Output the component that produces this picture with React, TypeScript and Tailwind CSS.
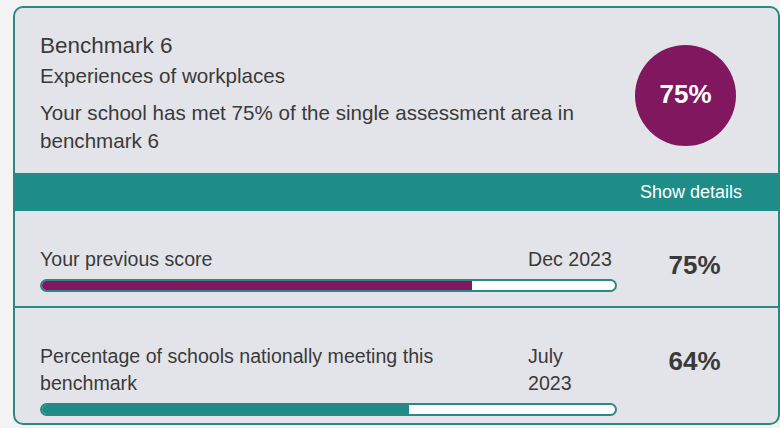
const rows = [
  { label: 'Your previous score', date: ['Dec 2023'], score: 75, fill: 'bg-[#80175f]', pt: 'pt-[35px]', scorePt: 'pt-[39px]', h: 'h-[95px]' },
  {
    label: 'Percentage of schools nationally meeting this benchmark',
    date: ['July', '2023'],
    score: 64,
    fill: 'bg-[#1e8c87]',
    pt: 'pt-[35px]',
    scorePt: 'pt-[38px]',
    h: 'h-[117px] border-t-2 border-[#2b8985]',
  },
];

export default function App() {
  return (
    <div className="min-h-screen bg-[#f3f3f3] pt-[6px] pl-[13px] font-['Liberation_Sans',Arial,sans-serif] text-[#3a3a3a]">
      <div className="w-[767px] overflow-hidden rounded-[10px] border-2 border-[#2b8985] bg-[#e3e4e9]">
        <div className="flex h-[165px]">
          <div className="flex-1 pl-[25px] pt-[24px] pr-[40px]">
            <h2 className="text-[22.5px] leading-[27px]">Benchmark 6</h2>
            <p className="mt-[2px] text-[20.6px] leading-[29px]">Experiences of workplaces</p>
            <p className="mt-[8.5px] text-[20.6px] leading-[28.5px]">
              Your school has met 75% of the single assessment area in benchmark 6
            </p>
          </div>
          <div className="mt-[37px] mr-[42px] flex h-[101px] w-[101px] shrink-0 items-center justify-center rounded-full bg-[#80175f] pb-[3px] text-[26px] font-bold text-white">
            75%
          </div>
        </div>

        <div className="flex h-[38px] items-center justify-end bg-[#1e8c87] pr-[36px] text-[18px] text-white">
          Show details
        </div>

        {rows.map((r) => (
          <div key={r.label} className={`flex pl-[25px] ${r.h}`}>
            <div className={`w-[577px] ${r.pt}`}>
              <div className="flex text-[19.6px] leading-[27px]">
                <div className="flex-1 pr-[18px]">{r.label}</div>
                <div className="w-[89px] shrink-0">
                  {r.date.map((d) => (
                    <div key={d}>{d}</div>
                  ))}
                </div>
              </div>
              <div className="mt-[6px] h-[13px] overflow-hidden rounded-full border-2 border-[#2b8985] bg-white">
                <div className={`h-full ${r.fill}`} style={{ width: `${r.score}%` }} />
              </div>
            </div>
            <div className={`w-[155px] text-center text-[26px] font-bold leading-[31px] ${r.scorePt}`}>{r.score}%</div>
          </div>
        ))}
      </div>
    </div>
  );
}
